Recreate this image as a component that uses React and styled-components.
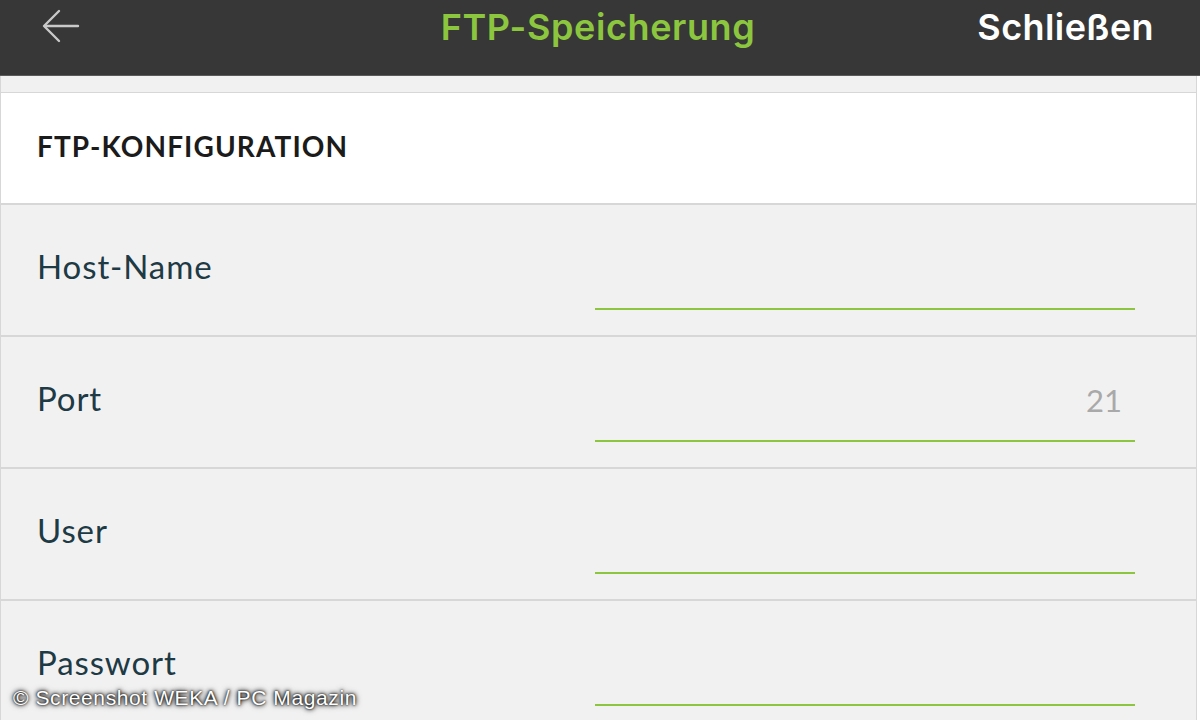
import React from 'react';
import styled, { createGlobalStyle } from 'styled-components';

const colors = {
  BAR: '#373737',
  GREEN: '#8cc63e',
  ROW: '#f2f1f1',
  LINE: '#d7d7d7',
  LABEL: '#1d3a45',
};

const Global = createGlobalStyle`
  html, body {
    margin: 0;
    padding: 0;
    background: #ffffff;
  }
  body {
    width: 1200px;
    height: 720px;
    overflow: hidden;
  }
`;

const Page = styled.div`
  position: relative;
  width: 1200px;
  height: 720px;
  overflow: hidden;
  background: #ffffff;
`;

const TopBar = styled.header`
  height: 75px;
  background: ${colors.BAR};
  display: grid;
  grid-template-columns: 1fr auto 1fr;
  align-items: center;
  padding: 0 46px 0 42px;
  border-bottom: 1px solid #5a5a5a;
`;

const Back = styled.button`
  justify-self: start;
  background: none;
  border: 0;
  padding: 0;
  width: 38px;
  height: 34px;
  margin-top: -24px;
  display: flex;
  align-items: center;
  svg { display: block; }
`;

const Title = styled.h1`
  margin: -22px 0 0;
  font-family: Inter, "Liberation Sans", sans-serif;
  font-weight: 600;
  font-size: 36px;
  letter-spacing: 0.6px;
  color: ${colors.GREEN};
`;

const Close = styled.span`
  justify-self: end;
  margin-top: -22px;
  font-family: Inter, "Liberation Sans", sans-serif;
  font-weight: 600;
  font-size: 36px;
  letter-spacing: 0.4px;
  color: #ffffff;
`;

const Frame = styled.div`
  margin-right: 3px;
  border-left: 1px solid ${colors.LINE};
  border-right: 1px solid ${colors.LINE};
`;

const Strip = styled.div`
  height: 16px;
  background: ${colors.ROW};
  border-bottom: 1px solid ${colors.LINE};
`;

const Section = styled.div`
  height: 110px;
  background: #ffffff;
  display: flex;
  align-items: center;
  padding: 0 0 4px 36px;
  box-sizing: border-box;
  border-bottom: 2px solid ${colors.LINE};
  font-family: Lato, "Liberation Sans", sans-serif;
  font-weight: 700;
  font-size: 28px;
  letter-spacing: 1.1px;
  color: #1b1b1b;
  height: 112px;
`;

const Row = styled.div`
  height: 130px;
  background: ${colors.ROW};
  border-bottom: 2px solid ${colors.LINE};
  display: grid;
  grid-template-columns: 1fr 540px;
  padding: 0 61px 0 36px;
`;

const Label = styled.label`
  align-self: start;
  margin-top: 41px;
  font-family: Lato, "Liberation Sans", sans-serif;
  font-size: 33px;
  letter-spacing: 0.9px;
  color: ${colors.LABEL};
`;

const Field = styled.div`
  margin-top: 40px;
  height: 63px;
  box-sizing: content-box;
  border-bottom: 2px solid ${colors.GREEN};
  display: flex;
  align-items: flex-start;
  justify-content: flex-end;
  padding-right: 13px;
  font-family: Lato, "Liberation Sans", sans-serif;
  font-size: 31px;
  line-height: 38px;
  color: #a9a9a9;
`;

const Value = styled.span`
  margin-top: 4px;
`;

const Credit = styled.div`
  position: absolute;
  left: 13px;
  bottom: 10px;
  font-family: "Liberation Sans", Arial, sans-serif;
  font-size: 21px;
  letter-spacing: 0.6px;
  color: #ffffff;
  text-shadow: 0 0 2px #000, 0 0 4px #000, 0 0 6px rgba(0,0,0,0.7);
`;

const fields = [
  { label: 'Host-Name', value: '' },
  { label: 'Port', value: '21' },
  { label: 'User', value: '' },
  { label: 'Passwort', value: '' },
];

export default function App() {
  return (
    <Page>
      <Global />
      <TopBar>
        <Back aria-label="Zurück">
          <svg width="38" height="34" viewBox="0 0 38 34" fill="none" stroke="#c9c9c9" strokeWidth="2.4" strokeLinecap="round" strokeLinejoin="round">
            <path d="M36 17H3" />
            <path d="M17 2L2 17l15 15" />
          </svg>
        </Back>
        <Title>FTP-Speicherung</Title>
        <Close>Schließen</Close>
      </TopBar>
      <Frame>
        <Strip />
        <Section>FTP-KONFIGURATION</Section>
        {fields.map(f => (
          <Row key={f.label}>
            <Label>{f.label}</Label>
            <Field>{f.value && <Value>{f.value}</Value>}</Field>
          </Row>
        ))}
      </Frame>
      <Credit>© Screenshot WEKA / PC Magazin</Credit>
    </Page>
  );
}
